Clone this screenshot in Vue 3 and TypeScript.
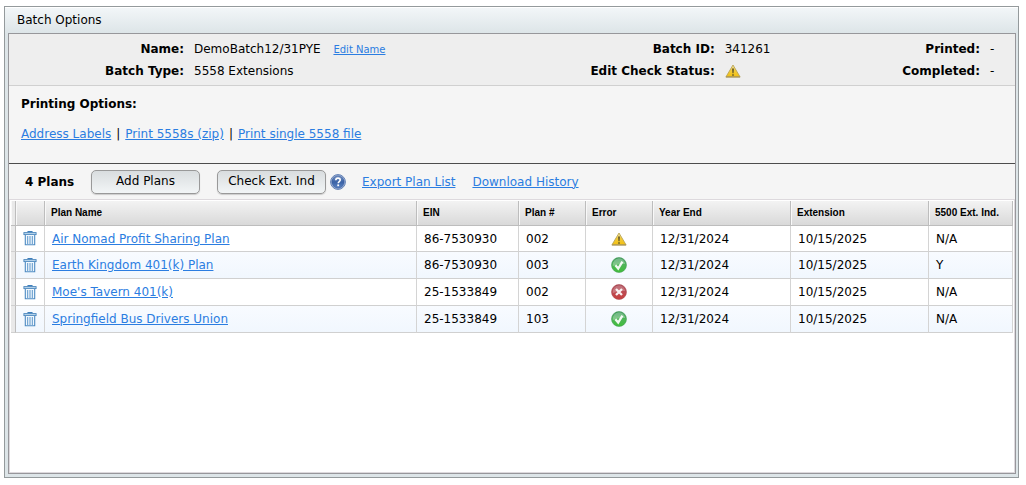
<script setup lang="ts">
import { ref } from 'vue'

type Status = 'warning' | 'ok' | 'error'

interface Plan {
  name: string
  ein: string
  planNo: string
  status: Status
  yearEnd: string
  extension: string
  extInd: string
}

const plans = ref<Plan[]>([
  { name: 'Air Nomad Profit Sharing Plan', ein: '86-7530930', planNo: '002', status: 'warning', yearEnd: '12/31/2024', extension: '10/15/2025', extInd: 'N/A' },
  { name: 'Earth Kingdom 401(k) Plan', ein: '86-7530930', planNo: '003', status: 'ok', yearEnd: '12/31/2024', extension: '10/15/2025', extInd: 'Y' },
  { name: "Moe's Tavern 401(k)", ein: '25-1533849', planNo: '002', status: 'error', yearEnd: '12/31/2024', extension: '10/15/2025', extInd: 'N/A' },
  { name: 'Springfield Bus Drivers Union', ein: '25-1533849', planNo: '103', status: 'ok', yearEnd: '12/31/2024', extension: '10/15/2025', extInd: 'N/A' },
])

function removePlan(plan: Plan): void {
  plans.value = plans.value.filter((p) => p !== plan)
}
</script>

<template>
  <svg class="defs" width="0" height="0" aria-hidden="true">
    <defs>
      <linearGradient id="g-warn" x1="0" y1="0" x2="0" y2="1">
        <stop offset="0" stop-color="#efe6b8" />
        <stop offset="0.45" stop-color="#f2cb3c" />
        <stop offset="1" stop-color="#f3c010" />
      </linearGradient>
      <linearGradient id="g-ok" x1="0" y1="0" x2="0" y2="1">
        <stop offset="0" stop-color="#2f9150" />
        <stop offset="0.5" stop-color="#4fb558" />
        <stop offset="1" stop-color="#3fbf38" />
      </linearGradient>
      <linearGradient id="g-err" x1="0" y1="0" x2="0" y2="1">
        <stop offset="0" stop-color="#a23a48" />
        <stop offset="0.5" stop-color="#bd4b52" />
        <stop offset="1" stop-color="#c73e3c" />
      </linearGradient>
      <linearGradient id="g-help" x1="0" y1="0" x2="0" y2="1">
        <stop offset="0" stop-color="#7794c4" />
        <stop offset="0.5" stop-color="#3a62a6" />
        <stop offset="1" stop-color="#5b83c2" />
      </linearGradient>
    </defs>
    <symbol id="i-warning" viewBox="0 0 16 16">
      <path d="M8 2 15 13.8H1Z" fill="url(#g-warn)" stroke="#b9a455" stroke-width=".9" stroke-linejoin="round" />
      <path d="M.8 14h14.4" stroke="#a08a48" stroke-width="1" />
      <path d="M7 5.6h2L8.6 10.2H7.4Z" fill="#6b5f2a" />
      <rect x="7.2" y="11.2" width="1.6" height="1.6" fill="#6b5f2a" />
    </symbol>
    <symbol id="i-ok" viewBox="0 0 16 16">
      <circle cx="8" cy="8" r="7.5" fill="url(#g-ok)" stroke="#4c9f5d" stroke-width=".6" />
      <path d="M1.8 8A6.2 6.2 0 0 1 14.2 7Q8 6.5 1.8 9Z" fill="#fff" opacity=".3" />
      <path d="M4.4 8.2 7.2 11.6 11.4 4.6" fill="none" stroke="#fff" stroke-width="2.3" opacity=".92" />
    </symbol>
    <symbol id="i-error" viewBox="0 0 16 16">
      <circle cx="8" cy="8" r="7.5" fill="url(#g-err)" stroke="#ae5058" stroke-width=".6" />
      <path d="M1.8 8A6.2 6.2 0 0 1 14.2 7Q8 6.5 1.8 9Z" fill="#fff" opacity=".25" />
      <path d="M5 5l6 6M11 5l-6 6" stroke="#fff" stroke-width="2.3" opacity=".92" />
    </symbol>
    <symbol id="i-trash" viewBox="0 0 14 15">
      <path d="M5 1.3V.6h4v.7" fill="none" stroke="#3f7fbb" stroke-width="1.1" />
      <rect x=".9" y="1.6" width="12.2" height="2" fill="#b9d5ec" stroke="#4a86bd" stroke-width=".9" />
      <path d="M2.3 4V13.8H11.7V4" fill="#f2f8fd" stroke="#4d8ac2" stroke-width="1.1" />
      <path d="M4.7 5v8M7 5v8M9.3 5v8" stroke="#5b95ca" stroke-width="1" />
    </symbol>
  </svg>

  <main class="page">
    <section class="panel">
      <h1 class="title">Batch Options</h1>
      <div class="body">
        <div class="info">
          <span class="label">Name:</span>
          <span class="name">DemoBatch12/31PYE <a href="#" class="edit">Edit Name</a></span>
          <span class="label">Batch ID:</span>
          <span>341261</span>
          <span class="label">Printed:</span>
          <span>-</span>
          <span class="label">Batch Type:</span>
          <span>5558 Extensions</span>
          <span class="label">Edit Check Status:</span>
          <span class="status">
            <svg class="icon" role="img" aria-label="Warning"><use href="#i-warning" /></svg>
          </span>
          <span class="label">Completed:</span>
          <span>-</span>
        </div>

        <div class="printing">
          <h2>Printing Options:</h2>
          <p>
            <a href="#">Address Labels</a><span>|</span><a href="#">Print 5558s (zip)</a><span>|</span><a href="#">Print single 5558 file</a>
          </p>
        </div>

        <div class="toolbar">
          <strong class="count">{{ plans.length }} Plans</strong>
          <button type="button" class="btn add">Add Plans</button>
          <button type="button" class="btn">Check Ext. Ind</button>
          <button type="button" class="help" aria-label="Help">
            <svg viewBox="0 0 16 16" width="16" height="16">
              <circle cx="8" cy="8" r="7.4" fill="#c3d0e6" stroke="#5d7db3" stroke-width="1" />
              <circle cx="8" cy="8" r="6.2" fill="url(#g-help)" stroke="#34589a" stroke-width=".6" />
              <path d="M5.8 6.3C5.8 4.7 6.8 4.1 8 4.1s2.2.7 2.2 1.9c0 1.5-2 1.6-2 3.3" fill="none" stroke="#fff" stroke-width="1.6" />
              <rect x="7.3" y="10.4" width="1.8" height="1.8" fill="#fff" />
            </svg>
          </button>
          <a href="#" class="export">Export Plan List</a>
          <a href="#">Download History</a>
        </div>

        <div class="grid">
          <table>
            <colgroup>
              <col class="c-gutter" />
              <col class="c-trash" />
              <col />
              <col class="c-ein" />
              <col class="c-small" />
              <col class="c-small" />
              <col class="c-date" />
              <col class="c-date" />
              <col class="c-ind" />
            </colgroup>
            <thead>
              <tr>
                <th></th>
                <th></th>
                <th scope="col">Plan Name</th>
                <th scope="col">EIN</th>
                <th scope="col">Plan #</th>
                <th scope="col">Error</th>
                <th scope="col">Year End</th>
                <th scope="col">Extension</th>
                <th scope="col">5500 Ext. Ind.</th>
              </tr>
            </thead>
            <tbody>
              <tr v-for="plan in plans" :key="plan.name">
                <td class="gutter"></td>
                <td class="center">
                  <button type="button" class="trash" :aria-label="`Delete ${plan.name}`" @click="removePlan(plan)">
                    <svg width="14" height="15"><use href="#i-trash" /></svg>
                  </button>
                </td>
                <td><a href="#">{{ plan.name }}</a></td>
                <td>{{ plan.ein }}</td>
                <td>{{ plan.planNo }}</td>
                <td class="center">
                  <svg class="icon" role="img" :aria-label="plan.status"><use :href="`#i-${plan.status}`" /></svg>
                </td>
                <td>{{ plan.yearEnd }}</td>
                <td>{{ plan.extension }}</td>
                <td>{{ plan.extInd }}</td>
              </tr>
            </tbody>
          </table>
        </div>
      </div>
    </section>
  </main>
</template>

<style>
body {
  background: #fff;
}
</style>

<style scoped>
* {
  box-sizing: border-box;
}
.defs {
  position: absolute;
}
.page {
  display: flex;
  min-height: 100vh;
  padding: 6px 7px 7px 4px;
  font-family: Verdana, "DejaVu Sans", sans-serif;
  font-size: 12px;
  line-height: 16px;
  color: #000;
}
.panel {
  flex: 1;
  display: flex;
  flex-direction: column;
  padding: 0 2px 3px 3px;
  border: 1px solid #949a9c;
  background: #dde5e8;
}
.title {
  margin: 0 -2px 0 -3px;
  height: 26px;
  padding: 1px 12px 0;
  border-top: 1px solid #fff;
  background: linear-gradient(#f2f6f8, #dde5e8);
  font-size: 12px;
  font-weight: normal;
  line-height: 22px;
}
.body {
  flex: 1;
  display: flex;
  flex-direction: column;
  border: 1px solid #97979b;
  background: #f5f5f5;
}
.info {
  display: grid;
  grid-template-columns: 175px 7fr 125px 3fr 80px 25px;
  grid-auto-rows: 22px;
  column-gap: 10px;
  padding: 4px 0 3px;
  border-bottom: 1px solid #d0d0d0;
  background: #eee;
  line-height: 22px;
  white-space: nowrap;
}
.label {
  font-weight: bold;
  text-align: right;
}
.status {
  display: flex;
  align-items: center;
}
.edit {
  margin-left: 9px;
  font-size: 10px;
  line-height: 16px;
}
a {
  color: #2b7de1;
  text-decoration: underline;
}
.printing {
  padding: 10px 12px 21px;
  border-bottom: 1px solid #4c4c4c;
}
.printing h2 {
  margin: 0 0 14px;
  font-size: 12px;
  line-height: 16px;
}
.printing p {
  display: flex;
  margin: 0;
  gap: 5px;
}
.toolbar {
  display: flex;
  align-items: center;
  height: 35px;
  padding-left: 16px;
}
.count {
  width: 66px;
}
.btn {
  width: 109px;
  height: 24px;
  padding: 0 0 2px;
  border: 1px solid #999;
  border-radius: 5px;
  background: linear-gradient(#d9dddf, #f2f5f6);
  box-shadow: 0 1px 1px #ccc;
  font: inherit;
  color: #000;
}
.add {
  margin-right: 17px;
}
.help {
  display: flex;
  margin: 0 16px 0 4px;
  padding: 0;
  border: 0;
  background: none;
}
.export {
  margin-right: 17px;
}
.grid {
  flex: 1;
  padding: 1px 1px 0;
  border: 1px solid #ddd9dd;
  background: #fff;
}
table {
  width: 100%;
  table-layout: fixed;
  border-collapse: separate;
  border-spacing: 0;
}
.c-gutter { width: 5px; }
.c-trash { width: 29px; }
.c-ein { width: 102px; }
.c-small { width: 67px; }
.c-date { width: 138px; }
.c-ind { width: 84px; }
th {
  height: 25px;
  padding: 0 6px;
  border-right: 1px solid #bdbdbd;
  border-bottom: 1px solid #bdbdbd;
  background: linear-gradient(#f3f3f3, #d9d9d9);
  box-shadow: inset 1px 0 #f8f8f8;
  font: bold 10px/14px "Liberation Sans", Arial, sans-serif;
  text-align: left;
  white-space: nowrap;
}
td {
  height: 27px;
  padding: 0 7px;
  border-right: 1px solid #d4d4d4;
  border-bottom: 1px solid #d0d0d0;
  background: #fff;
  white-space: nowrap;
}
tbody tr:first-child td {
  height: 26px;
}
tbody tr:nth-child(even) td {
  background: linear-gradient(#f8fbff, #f1f7fe);
}
th:first-child,
tbody tr td.gutter {
  padding: 0;
  background: #e9e9e9;
}
td.gutter {
  border-right-color: #bdbdbd;
}
td.center {
  padding: 0;
  text-align: center;
}
.trash {
  display: block;
  margin: 0 auto;
  padding: 0;
  border: 0;
  background: none;
}
.trash svg,
.icon {
  display: block;
}
.icon {
  width: 16px;
  height: 16px;
}
td .icon {
  margin: 0 auto;
}
</style>
